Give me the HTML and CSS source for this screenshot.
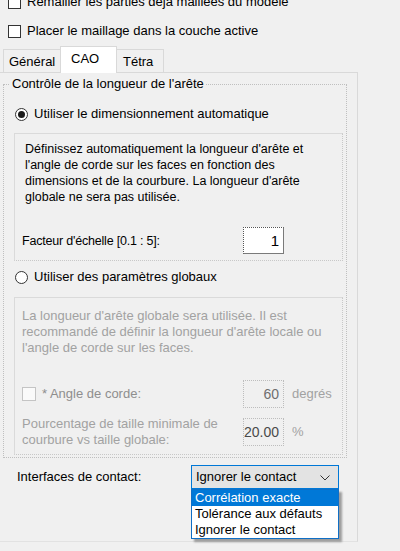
FILE: index.html
```html
<!DOCTYPE html>
<html lang="fr">
<head>
<meta charset="utf-8">
<title>CAO</title>
<link rel="stylesheet" href="styles.css">
</head>
<body>
<div class="dialog">
  <div class="checks">
    <div class="check-row"><span class="cb"></span><span>Remailler les parties déjà maillées du modèle</span></div>
    <div class="check-row"><span class="cb"></span><span>Placer le maillage dans la couche active</span></div>
  </div>

  <div class="tabs">
    <div class="tab tab-general">Général</div>
    <div class="tab tab-active">CAO</div>
    <div class="tab tab-tetra">Tétra</div>
  </div>

  <div class="panel">
    <div class="group">
      <span class="group-title">Contrôle de la longueur de l'arête</span>

      <div class="radio-row"><span class="radio radio-on"></span><span>Utiliser le dimensionnement automatique</span></div>

      <div class="box box-auto">
        <p class="desc">Définissez automatiquement la longueur d'arête et<br>l'angle de corde sur les faces en fonction des<br>dimensions et de la courbure. La longueur d'arête<br>globale ne sera pas utilisée.</p>
        <div class="param-row scale-row">
          <span class="scale-label">Facteur d'échelle [0.1 : 5]:</span>
          <span class="field field-on">1</span>
        </div>
      </div>

      <div class="radio-row radio-row-2"><span class="radio"></span><span>Utiliser des paramètres globaux</span></div>

      <div class="box box-global">
        <p class="desc desc-off">La longueur d'arête globale sera utilisée. Il est<br>recommandé de définir la longueur d'arête locale ou<br>l'angle de corde sur les faces.</p>
        <div class="param-row angle-row">
          <span class="angle-label"><span class="cb cb-off"></span><span>* Angle de corde:</span></span>
          <span class="field field-off">60</span>
          <span class="unit">degrés</span>
        </div>
        <div class="param-row pct-row">
          <span class="label-off">Pourcentage de taille minimale de<br>courbure vs taille globale:</span>
          <span class="field field-off field-dark">20.00</span>
          <span class="unit">%</span>
        </div>
      </div>
    </div>

    <div class="contact-row">
      <span>Interfaces de contact:</span>
      <div class="combo">
        <span>Ignorer le contact</span>
        <svg class="chev" width="10" height="6" viewBox="0 0 10 6"><path d="M0.5 0.5 L5 5 L9.5 0.5" fill="none" stroke="#333" stroke-width="1"/></svg>
        <ul class="droplist">
          <li class="sel">Corrélation exacte</li>
          <li>Tolérance aux défauts</li>
          <li>Ignorer le contact</li>
        </ul>
      </div>
    </div>
  </div>
</div>
</body>
</html>
```

FILE: styles.css
```css
html, body {
  margin: 0;
  padding: 0;
}
body {
  width: 400px;
  height: 551px;
  overflow: hidden;
  background: #f0f0f0;
  font-family: "Liberation Sans", Arial, sans-serif;
  font-size: 13px;
  line-height: 16px;
  color: #000;
}

.checks {
  margin-top: -6px;
  padding-left: 8px;
}
.check-row {
  display: flex;
  align-items: center;
  gap: 6px;
  height: 16px;
  white-space: nowrap;
}
.check-row + .check-row {
  margin-top: 13px;
}
.cb {
  display: inline-block;
  width: 13px;
  height: 13px;
  box-sizing: border-box;
  border: 1px solid #333;
  background: #fff;
  flex: none;
}

.tabs {
  display: flex;
  align-items: flex-end;
  margin-top: 7px;
  padding-left: 3px;
  height: 26px;
  position: relative;
  z-index: 2;
}
.tab {
  box-sizing: border-box;
  height: 23px;
  border: 1px solid #d9d9d9;
  border-bottom: none;
  display: flex;
  align-items: center;
  padding-top: 1px;
}
.tab-general {
  width: 58px;
  padding-left: 5px;
}
.tab-active {
  width: 57px;
  height: 27px;
  margin-left: -1px;
  margin-bottom: -1px;
  background: #fff;
  padding-left: 10px;
  padding-bottom: 4px;
  position: relative;
  z-index: 3;
}
.tab-tetra {
  width: 48px;
  margin-left: -1px;
  padding-left: 6px;
}

.panel {
  width: 358px;
  box-sizing: border-box;
  height: 470px;
  border-top: 1px solid #d9d9d9;
  border-right: 1px solid #d9d9d9;
  border-bottom: 1px solid #e2e2e2;
  position: relative;
  z-index: 1;
}

.group {
  margin: 11px 0 0 3px;
  width: 344px;
  box-sizing: border-box;
  border: 1px dotted #bfbfbf;
  padding-bottom: 2px;
}
.group-title {
  display: block;
  width: fit-content;
  margin-top: -9px;
  margin-left: 6px;
  padding: 0 2px;
  background: #f0f0f0;
  white-space: nowrap;
}

.radio-row {
  display: flex;
  align-items: center;
  gap: 6px;
  height: 16px;
  margin-top: 14px;
  padding-left: 11px;
}
.radio-row-2 {
  margin-top: 8px;
}
.radio {
  width: 13px;
  height: 13px;
  box-sizing: border-box;
  border: 1px solid #333;
  border-radius: 50%;
  background: #fff;
  flex: none;
  display: flex;
  align-items: center;
  justify-content: center;
}
.radio-on::after {
  content: "";
  width: 7px;
  height: 7px;
  border-radius: 50%;
  background: #1a1a1a;
}

.box {
  margin-left: 10px;
  width: 329px;
  box-sizing: border-box;
  border-top: 1px solid #dadada;
  border-left: 1px solid #dadada;
  border-right: 1px dotted #c8c8c8;
  border-bottom: 1px dotted #c8c8c8;
  padding-left: 7px;
}
.box-auto {
  margin-top: 11px;
  padding-top: 7px;
  padding-bottom: 6px;
}
.box-global {
  margin-top: 12px;
  padding-top: 10px;
  padding-bottom: 6px;
}
.desc {
  margin: 0;
  white-space: nowrap;
}
.box-auto .desc {
  padding-left: 3px;
  font-size: 12.5px;
}
.scale-label {
  font-size: 12.5px;
  letter-spacing: -0.2px;
}
.desc-off,
.label-off {
  color: #a2a2a2;
}

.param-row {
  display: grid;
  grid-template-columns: 213px 41px auto;
  column-gap: 8px;
  align-items: center;
  white-space: nowrap;
}
.scale-row {
  margin-top: 22px;
}
.angle-row {
  margin-top: 24px;
}
.pct-row {
  margin-top: 8px;
}
.angle-label {
  display: flex;
  align-items: center;
  gap: 6px;
  color: #8e8e8e;
}
.cb-off {
  width: 14px;
  height: 14px;
  border-color: #c4c4c4;
  background: #fafafa;
}

.field {
  box-sizing: border-box;
  height: 28px;
  display: flex;
  align-items: center;
  justify-content: flex-end;
  padding-right: 4px;
}
.field-on {
  height: 27px;
  background: #fff;
  border-top: 1px dotted #555;
  border-left: 1px dotted #555;
  border-right: 1px solid #7a7a7a;
  border-bottom: 1px solid #7a7a7a;
  font-size: 15px;
}
.field-off {
  background: #f0f0f0;
  border: 1px dotted #bdbdbd;
  color: #6e6e6e;
  font-size: 14px;
}
.field-dark {
  color: #4a4a4a;
}
.unit {
  color: #a2a2a2;
}

.contact-row {
  display: grid;
  grid-template-columns: 174px 148px;
  align-items: center;
  margin-top: 7px;
  padding-left: 17px;
}
.combo {
  position: relative;
  height: 24px;
  box-sizing: border-box;
  border: 1px solid #0078d7;
  background: #e3e3e3;
  display: flex;
  align-items: center;
  padding-left: 4px;
  white-space: nowrap;
}
.chev {
  position: absolute;
  right: 8px;
  top: 9px;
}
.droplist {
  position: absolute;
  top: 23px;
  left: -1px;
  width: 148px;
  box-sizing: border-box;
  margin: 0;
  padding: 0;
  list-style: none;
  background: #fff;
  border: 1px solid #0f6fc6;
  box-shadow: 3px 3px 2px rgba(0, 0, 0, 0.35);
}
.droplist li {
  height: 16px;
  line-height: 16px;
  padding-left: 3px;
}
.droplist li.sel {
  background: #0078d7;
  color: #fff;
}
```
